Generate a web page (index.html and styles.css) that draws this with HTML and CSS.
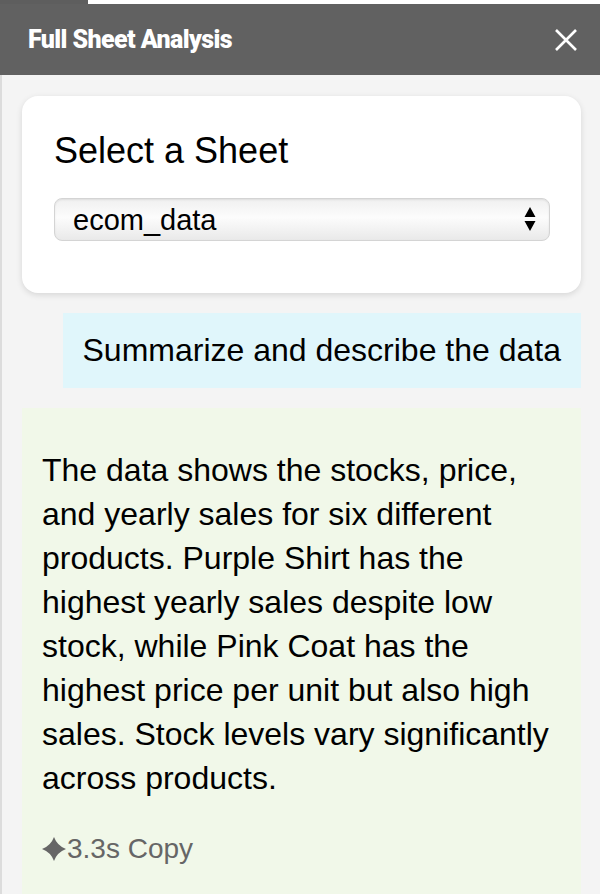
FILE: index.html
```html
<!DOCTYPE html>
<html lang="en">
<head>
<meta charset="utf-8">
<title>Full Sheet Analysis</title>
<link rel="stylesheet" href="styles.css">
</head>
<body>
<div class="topstrip"><span class="tab"></span></div>
<header class="titlebar">
  <h1 class="title">Full Sheet Analysis</h1>
  <button class="close" aria-label="Close">
    <svg width="24" height="24" viewBox="0 0 24 24"><path d="M2 2 L22 22 M22 2 L2 22" stroke="#fff" stroke-width="2.6" fill="none"/></svg>
  </button>
</header>
<main class="panel">
  <section class="card">
    <h2 class="card-title">Select a Sheet</h2>
    <div class="select-wrap">
      <select class="sheet-select">
        <option>ecom_data</option>
      </select>
      <svg class="arrows" width="12" height="26" viewBox="0 0 12 26"><path d="M6 1 L11.5 11 L0.5 11 Z M0.5 15 L11.5 15 L6 25 Z" fill="#000"/></svg>
    </div>
  </section>
  <div class="user-row">
    <div class="user-msg">Summarize and describe the data</div>
  </div>
  <section class="reply">
    <p class="reply-text">The data shows the stocks, price, and yearly sales for six different products. Purple Shirt has the highest yearly sales despite low stock, while Pink Coat has the highest price per unit but also high sales. Stock levels vary significantly across products.</p>
    <div class="reply-meta"><svg class="spark" width="24" height="24" viewBox="0 0 24 24"><path d="M12 0 Q15.2 8.8 24 12 Q15.2 15.2 12 24 Q8.8 15.2 0 12 Q8.8 8.8 12 0 Z" fill="#666"/></svg><span>3.3s Copy</span></div>
  </section>
</main>
</body>
</html>
```
FILE: styles.css
```css
* { box-sizing: border-box; }
html, body { margin: 0; padding: 0; }
body {
  width: 600px;
  height: 894px;
  overflow: hidden;
  background: #f4f4f4;
  font-family: "Liberation Sans", Arial, sans-serif;
  color: #000;
}
.topstrip {
  height: 4px;
  background: #fff;
  display: flex;
}
.tab {
  width: 88px;
  background: #5e5e5e;
}
.titlebar {
  height: 71px;
  background: #616161;
  display: flex;
  align-items: center;
  justify-content: space-between;
  padding: 0 22px 0 28px;
}
.title {
  margin: 0;
  font-family: Roboto, "Liberation Sans", sans-serif;
  font-weight: 900;
  font-size: 25px;
  color: #fff;
  letter-spacing: -0.6px;
}
.close {
  background: none;
  border: 0;
  padding: 0;
  width: 24px;
  height: 24px;
  display: flex;
}
.panel {
  border-left: 2px solid #dcdcdc;
  height: 819px;
  padding: 21px 19px 0 20px;
  display: flex;
  flex-direction: column;
  gap: 20px;
}
.card {
  background: #fff;
  border-radius: 16px;
  box-shadow: 0 2px 6px rgba(0,0,0,0.12);
  padding: 31px 31px 52px 32px;
}
.card-title {
  margin: 0 0 23px 0;
  font-size: 36px;
  font-weight: 400;
  line-height: 48px;
}
.select-wrap {
  position: relative;
}
.sheet-select {
  -webkit-appearance: none;
  appearance: none;
  display: block;
  width: 100%;
  height: 43px;
  border: 1px solid #d4d4d4;
  border-radius: 8px;
  background: linear-gradient(to bottom, #f0f0f0 0%, #fcfcfc 45%, #f7f7f7 60%, #e9e9e9 100%);
  box-shadow: inset 0 1px 2px rgba(0,0,0,0.08);
  font-family: "Liberation Sans", Arial, sans-serif;
  font-size: 29px;
  color: #000;
  padding: 0 40px 0 18px;
}
.arrows {
  position: absolute;
  right: 14px;
  top: 8px;
}
.user-row {
  display: flex;
  justify-content: flex-end;
}
.user-msg {
  background: #e0f6fb;
  padding: 15px 20px 16px 20px;
  font-size: 32px;
  line-height: 44px;
}
.reply {
  background: #f1f8e9;
  padding: 40px 20px 40px 20px;
  flex: 1;
}
.reply-text {
  margin: 0 0 33px 0;
  font-size: 32px;
  line-height: 44px;
}
.reply-meta {
  display: flex;
  align-items: center;
  gap: 1px;
  font-size: 28px;
  line-height: 32px;
  color: #666;
}
.spark { flex: none; }
```
